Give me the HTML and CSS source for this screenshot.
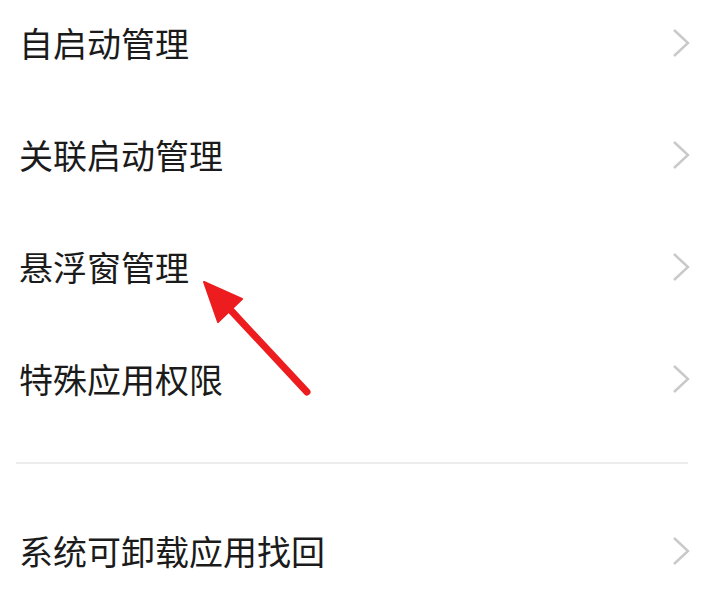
FILE: index.html
```html
<!DOCTYPE html>
<html lang="zh-CN">
<head>
<meta charset="utf-8">
<title>应用管理</title>
<link rel="stylesheet" href="styles.css">
</head>
<body>
<div class="page">
  <ul class="list">
    <li class="row"><span class="label">自启动管理</span><svg class="chev" viewBox="0 0 18 30"><path d="M2 2 L16 15 L2 28"/></svg></li>
    <li class="row"><span class="label">关联启动管理</span><svg class="chev" viewBox="0 0 18 30"><path d="M2 2 L16 15 L2 28"/></svg></li>
    <li class="row"><span class="label">悬浮窗管理</span><svg class="chev" viewBox="0 0 18 30"><path d="M2 2 L16 15 L2 28"/></svg></li>
    <li class="row"><span class="label">特殊应用权限</span><svg class="chev" viewBox="0 0 18 30"><path d="M2 2 L16 15 L2 28"/></svg></li>
  </ul>
  <div class="divider"></div>
  <ul class="list list-second">
    <li class="row"><span class="label">系统可卸载应用找回</span><svg class="chev" viewBox="0 0 18 30"><path d="M2 2 L16 15 L2 28"/></svg></li>
  </ul>
  <svg class="arrow" viewBox="0 0 717 607" width="717" height="607">
    <line x1="307" y1="392" x2="225" y2="304" />
    <polygon points="204,282 242,299 218,322" />
  </svg>
</div>
</body>
</html>
```
FILE: styles.css
```css
html, body {
  margin: 0;
  padding: 0;
  background: #ffffff;
}
.page {
  position: relative;
  width: 717px;
  height: 607px;
  overflow: hidden;
  font-family: "Noto Sans CJK SC", "Noto Sans", sans-serif;
  color: #1b1b1b;
}
.list {
  list-style: none;
  margin: -13px 0 0 0;
  padding: 0;
}
.list-second {
  margin-top: 31px;
}
.row {
  height: 112px;
  display: flex;
  align-items: center;
  justify-content: space-between;
  padding: 0 27px 0 19px;
}
.label {
  font-size: 34px;
  line-height: 1;
}
.chev {
  width: 18px;
  height: 30px;
  fill: none;
  stroke: #c9c9c9;
  stroke-width: 2.4;
}
.divider {
  height: 2px;
  background: #ececec;
  margin: 27px 29px 0 16px;
}
.arrow {
  position: absolute;
  left: 0;
  top: 0;
  pointer-events: none;
}
.arrow line {
  stroke: #ec1c1f;
  stroke-width: 7;
  stroke-linecap: round;
}
.arrow polygon {
  fill: #ec1c1f;
  stroke: #ec1c1f;
  stroke-width: 2;
  stroke-linejoin: round;
}
```
